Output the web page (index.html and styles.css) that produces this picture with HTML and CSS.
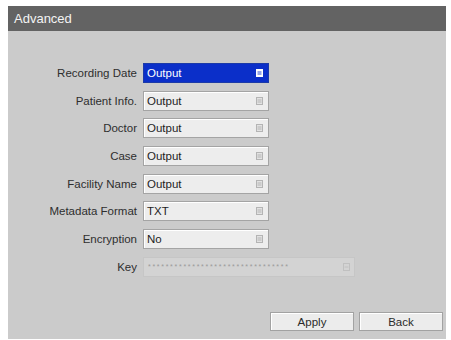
FILE: index.html
```html
<!DOCTYPE html>
<html lang="en">
<head>
    <meta charset="UTF-8">
    <meta name="viewport" content="width=device-width, initial-scale=1.0">
    <title>Advanced</title>
    <link rel="stylesheet" href="styles.css">
</head>
<body>
    <div class="panel">
        <div class="title-bar">Advanced</div>
        <div class="panel-body">
            <div class="form-grid">
                <label>Recording Date</label>
                <div class="select active"><span>Output</span><svg class="arrow" viewBox="0 0 7 8"><rect x="0.5" y="0.5" width="6" height="7" fill="#fff" stroke="#fff"/><line x1="1.5" y1="3" x2="5.5" y2="3" stroke="#2a4bd0"/><line x1="1.5" y1="5" x2="5.5" y2="5" stroke="#2a4bd0"/></svg></div>

                <label>Patient Info.</label>
                <div class="select"><span>Output</span><svg class="arrow" viewBox="0 0 7 8"><rect x="0.5" y="0.5" width="6" height="7" fill="#e2e2e2" stroke="#b4b4b4"/><line x1="1.5" y1="3" x2="5.5" y2="3" stroke="#b4b4b4"/><line x1="1.5" y1="5" x2="5.5" y2="5" stroke="#b4b4b4"/></svg></div>

                <label>Doctor</label>
                <div class="select"><span>Output</span><svg class="arrow" viewBox="0 0 7 8"><rect x="0.5" y="0.5" width="6" height="7" fill="#e2e2e2" stroke="#b4b4b4"/><line x1="1.5" y1="3" x2="5.5" y2="3" stroke="#b4b4b4"/><line x1="1.5" y1="5" x2="5.5" y2="5" stroke="#b4b4b4"/></svg></div>

                <label>Case</label>
                <div class="select"><span>Output</span><svg class="arrow" viewBox="0 0 7 8"><rect x="0.5" y="0.5" width="6" height="7" fill="#e2e2e2" stroke="#b4b4b4"/><line x1="1.5" y1="3" x2="5.5" y2="3" stroke="#b4b4b4"/><line x1="1.5" y1="5" x2="5.5" y2="5" stroke="#b4b4b4"/></svg></div>

                <label>Facility Name</label>
                <div class="select"><span>Output</span><svg class="arrow" viewBox="0 0 7 8"><rect x="0.5" y="0.5" width="6" height="7" fill="#e2e2e2" stroke="#b4b4b4"/><line x1="1.5" y1="3" x2="5.5" y2="3" stroke="#b4b4b4"/><line x1="1.5" y1="5" x2="5.5" y2="5" stroke="#b4b4b4"/></svg></div>

                <label>Metadata Format</label>
                <div class="select"><span>TXT</span><svg class="arrow" viewBox="0 0 7 8"><rect x="0.5" y="0.5" width="6" height="7" fill="#e2e2e2" stroke="#b4b4b4"/><line x1="1.5" y1="3" x2="5.5" y2="3" stroke="#b4b4b4"/><line x1="1.5" y1="5" x2="5.5" y2="5" stroke="#b4b4b4"/></svg></div>

                <label>Encryption</label>
                <div class="select"><span>No</span><svg class="arrow" viewBox="0 0 7 8"><rect x="0.5" y="0.5" width="6" height="7" fill="#e2e2e2" stroke="#b4b4b4"/><line x1="1.5" y1="3" x2="5.5" y2="3" stroke="#b4b4b4"/><line x1="1.5" y1="5" x2="5.5" y2="5" stroke="#b4b4b4"/></svg></div>

                <label>Key</label>
                <div class="key-field"><span>********************************</span><svg class="arrow" viewBox="0 0 7 8"><rect x="0.5" y="0.5" width="6" height="7" fill="none" stroke="#c0c0c0"/><line x1="1.5" y1="4" x2="5.5" y2="4" stroke="#c0c0c0"/></svg></div>
            </div>
            <div class="buttons">
                <button type="button" class="btn">Apply</button>
                <button type="button" class="btn">Back</button>
            </div>
        </div>
    </div>
</body>
</html>
```

FILE: styles.css
```css
body {
    margin: 0;
    padding: 6px 5px 1px 8px;
    background-color: #ffffff;
    font-family: "Liberation Sans", Arial, sans-serif;
}
.panel {
    height: 333px;
    display: flex;
    flex-direction: column;
}
.title-bar {
    height: 25px;
    line-height: 25px;
    padding-left: 6px;
    background-color: #636363;
    color: #f4f4f4;
    font-size: 13px;
}
.panel-body {
    flex: 1;
    display: flex;
    flex-direction: column;
    background-color: #cbcbcb;
    padding: 32px 3px 8px 0;
}
.form-grid {
    display: grid;
    grid-template-columns: 129px 212px;
    column-gap: 6px;
    row-gap: 7.7px;
    align-items: center;
}
.form-grid label {
    text-align: right;
    font-size: 11.5px;
    color: #2e2e2e;
}
.select {
    width: 126px;
    height: 20px;
    box-sizing: border-box;
    display: flex;
    align-items: center;
    justify-content: space-between;
    padding: 0 5px 0 3px;
    background-color: #ededed;
    border: 1px solid #a4a4a4;
    box-shadow: inset 1px 1px 0 #ffffff;
    font-size: 11.5px;
    color: #1e1e1e;
}
.select.active {
    background-color: #0b2fc9;
    border-color: #1b3aa8;
    box-shadow: none;
    color: #ffffff;
}
.arrow {
    width: 7px;
    height: 8px;
}
.key-field {
    width: 212px;
    height: 20px;
    box-sizing: border-box;
    display: flex;
    align-items: center;
    justify-content: space-between;
    padding: 0 4px 0 4px;
    background-color: #d3d3d3;
    border: 1px solid #c6c6c6;
    font-size: 7px;
    letter-spacing: 1.7px;
    color: #9a9a9a;
}
.buttons {
    margin-top: auto;
    display: flex;
    justify-content: flex-end;
    gap: 5px;
}
.btn {
    width: 84px;
    height: 19px;
    padding: 0;
    background-color: #ececec;
    border: 1px solid #a2a2a2;
    box-shadow: inset 1px 1px 0 #ffffff;
    font-family: "Liberation Sans", Arial, sans-serif;
    font-size: 11.5px;
    color: #2a2a2a;
}
```
